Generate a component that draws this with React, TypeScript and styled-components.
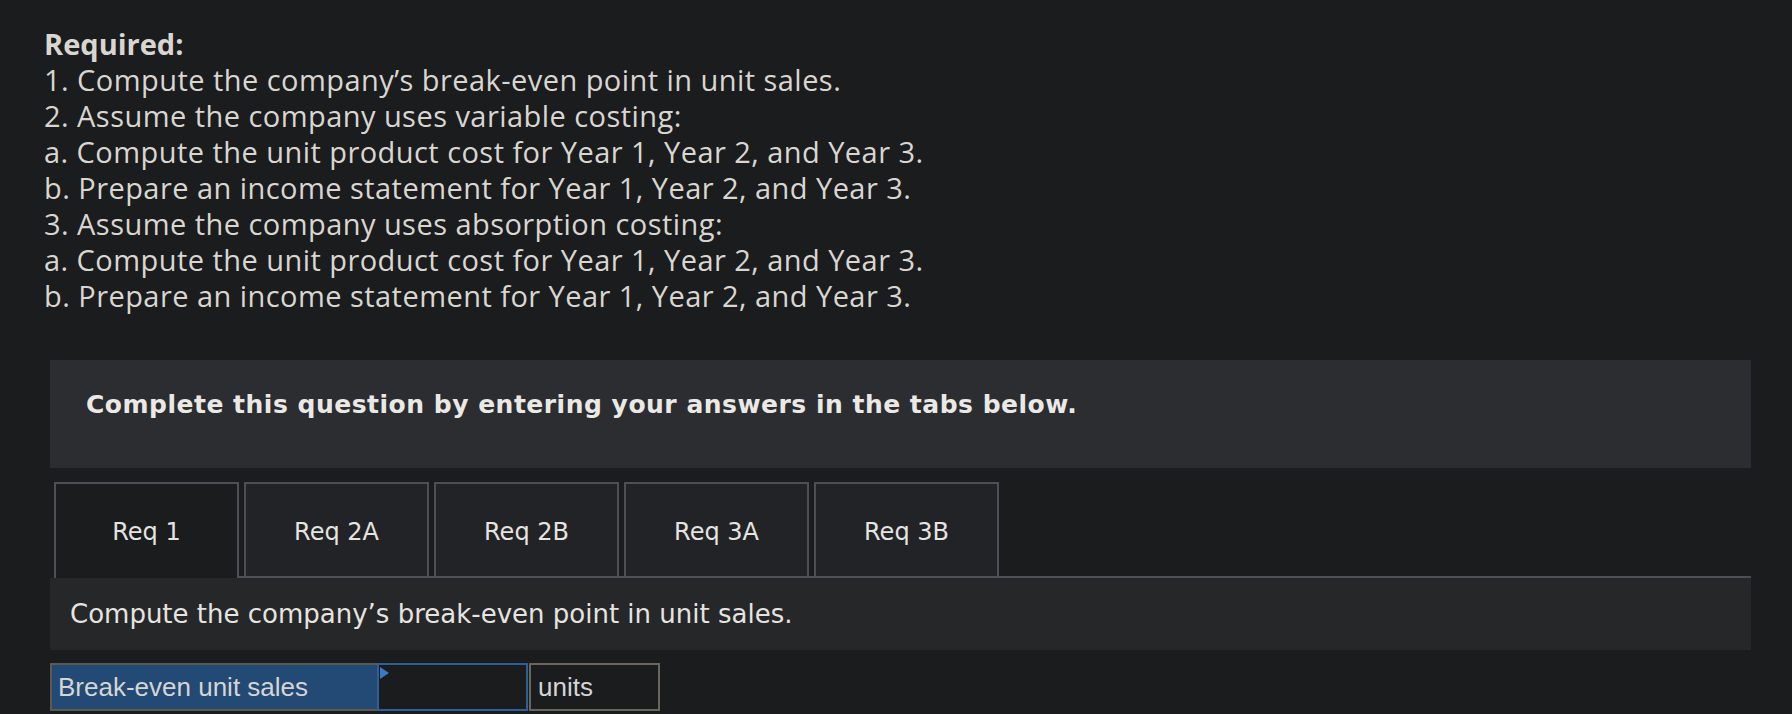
import styled, { createGlobalStyle } from 'styled-components';

const GlobalStyle = createGlobalStyle`
  html, body {
    margin: 0;
    padding: 0;
    background: #1b1c1e;
    overflow: hidden;
  }
`;

const Page = styled.div`
  width: 1792px;
  height: 714px;
  padding: 26px 41px 0 44px;
  box-sizing: border-box;
  background: #1b1c1e;
`;

const Instructions = styled.div`
  font-family: 'Open Sans', Lato, sans-serif;
  font-size: 29px;
  letter-spacing: 0.45px;
  line-height: 36px;
  color: #d9d6d1;
`;

const Heading = styled.div`
  font-weight: 700;
  letter-spacing: 0;
`;

const Section = styled.div`
  margin: 46px 0 0 6px;
`;

const Banner = styled.div`
  height: 108px;
  box-sizing: border-box;
  padding: 30px 0 0 36px;
  background: #2c2d30;
  font-family: 'DejaVu Sans', Verdana, sans-serif;
  font-weight: 700;
  font-size: 25px;
  letter-spacing: 0.5px;
  line-height: 30px;
  color: #ebe9e6;
`;

const TabRow = styled.div`
  display: flex;
  align-items: flex-start;
  gap: 5px;
  margin: 14px 0 0 4px;
  border-bottom: 2px solid #4a5055;
`;

const Tab = styled.div<{ $active?: boolean }>`
  width: 185px;
  height: ${(p) => (p.$active ? 96 : 94)}px;
  margin-bottom: ${(p) => (p.$active ? -2 : 0)}px;
  box-sizing: border-box;
  border: 2px solid #4a5055;
  border-bottom: none;
  background: ${(p) => (p.$active ? '#1b1c1e' : '#222326')};
  display: flex;
  align-items: center;
  justify-content: center;
  padding-top: ${(p) => (p.$active ? 2 : 4)}px;
  font-family: 'DejaVu Sans', Verdana, sans-serif;
  font-size: 24px;
  color: #e6e4e0;
`;

const Prompt = styled.div`
  height: 72px;
  display: flex;
  align-items: center;
  padding-left: 20px;
  background: #262729;
  font-family: 'DejaVu Sans', Verdana, sans-serif;
  font-size: 26px;
  color: #e6e4e0;
`;

const AnswerRow = styled.div`
  display: flex;
  margin-top: 13px;
  height: 48px;
`;

const Cell = styled.div<{ $w: number; $bg: string; $border: string }>`
  width: ${(p) => p.$w}px;
  box-sizing: border-box;
  border: 2px solid ${(p) => p.$border};
  background: ${(p) => p.$bg};
  display: flex;
  align-items: center;
  font-family: 'Liberation Sans', Arial, sans-serif;
  font-size: 26px;
  color: #d5d5d5;
`;

const Label = styled(Cell)`
  border-right: none;
  padding-left: 6px;
`;

const Input = styled(Cell)`
  position: relative;
`;

const Marker = styled.span`
  position: absolute;
  left: 1px;
  top: 2px;
  width: 0;
  height: 0;
  border-top: 6px solid transparent;
  border-bottom: 6px solid transparent;
  border-left: 9px solid #3b78c6;
`;

const Units = styled(Cell)`
  padding-left: 7px;
  margin-left: 1px;
`;

const lines = [
  '1. Compute the company\u2019s break-even point in unit sales.',
  '2. Assume the company uses variable costing:',
  'a. Compute the unit product cost for Year 1, Year 2, and Year 3.',
  'b. Prepare an income statement for Year 1, Year 2, and Year 3.',
  '3. Assume the company uses absorption costing:',
  'a. Compute the unit product cost for Year 1, Year 2, and Year 3.',
  'b. Prepare an income statement for Year 1, Year 2, and Year 3.',
];

const tabs = ['Req 1', 'Req 2A', 'Req 2B', 'Req 3A', 'Req 3B'];

export default function App() {
  return (
    <>
      <GlobalStyle />
      <Page>
        <Instructions>
          <Heading>Required:</Heading>
          {lines.map((l, i) => (
            <div key={i}>{l}</div>
          ))}
        </Instructions>
        <Section>
          <Banner>Complete this question by entering your answers in the tabs below.</Banner>
          <TabRow>
            {tabs.map((t, i) => (
              <Tab key={t} $active={i === 0}>
                {t}
              </Tab>
            ))}
          </TabRow>
          <Prompt>Compute the company’s break-even point in unit sales.</Prompt>
          <AnswerRow>
            <Label $w={327} $bg="#234a74" $border="#5e5a52">
              Break-even unit sales
            </Label>
            <Input $w={151} $bg="#1b1c1e" $border="#2f5f99">
              <Marker />
            </Input>
            <Units $w={131} $bg="#1b1c1e" $border="#6b665c">
              units
            </Units>
          </AnswerRow>
        </Section>
      </Page>
    </>
  );
}
